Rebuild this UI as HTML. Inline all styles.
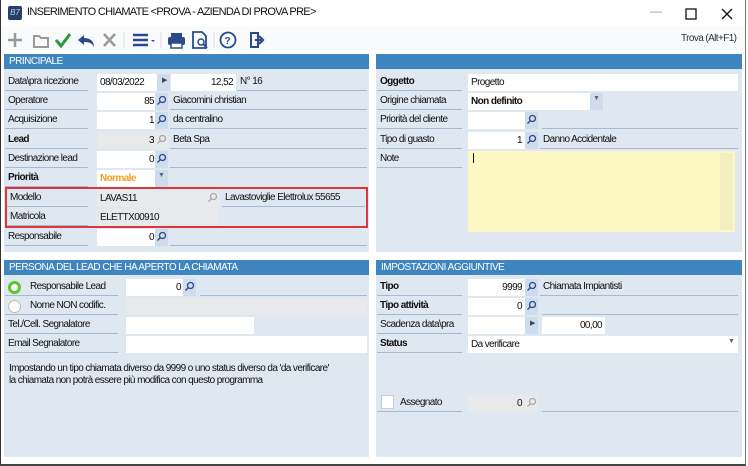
<!DOCTYPE html>
<html><head><meta charset="utf-8"><style>
*{margin:0;padding:0;box-sizing:border-box}
body{width:748px;height:466px;overflow:hidden;background:#fff;font-family:"Liberation Sans",sans-serif;font-size:10px;letter-spacing:-0.6px;color:#111;position:relative}
.a{position:absolute}
.win{left:0;top:0;width:746px;height:466px;border-left:1px solid #333;border-bottom:2px solid #444;border-right:1px solid #777}
.panel{background:#dfe7f1}
.hd{background:#3f86c0;color:#fff;font-size:10px;letter-spacing:-0.5px;height:15px;line-height:15px;padding-left:5px}
.lb{height:17px;line-height:16px;border-bottom:1px solid #a7b9d1;padding-left:3px;white-space:nowrap}
.b{font-weight:bold}
.in{background:#fff;height:17px;line-height:17px;padding:0 3px;white-space:nowrap;overflow:hidden}
.g{background:#e8e9eb}
.r{text-align:right}
.bt{background:#cfdcee;height:17px;width:13px}
.ds{height:17px;line-height:16px;border-bottom:1px solid #a7b9d1;padding-left:3px;white-space:nowrap;overflow:hidden}
</style></head><body>
<div class="a win"></div>
<!-- title -->
<div class="a" style="left:8px;top:6px;width:14px;height:14px;background:#2c3e66;border-radius:2px;color:#9fd0ff;font-size:8px;line-height:14px;text-align:center;font-style:italic;letter-spacing:0">B7</div>
<div class="a" style="left:27px;top:6px;font-size:11px;letter-spacing:-0.7px">INSERIMENTO CHIAMATE &lt;PROVA - AZIENDA DI PROVA PRE&gt;</div>
<div class="a" style="left:650px;top:4px;color:#999;font-size:12px">—</div>
<svg class="a" style="left:685px;top:8px" width="12" height="12"><rect x="1" y="1" width="10" height="10" fill="none" stroke="#111" stroke-width="1.3"/></svg>
<svg class="a" style="left:721px;top:8px" width="12" height="12"><path d="M1 1L11 11M11 1L1 11" stroke="#111" stroke-width="1.3"/></svg>
<!-- toolbar -->
<div class="a" style="left:1px;top:27px;width:744px;height:24px;background:#f9fafb"></div>
<svg class="a" style="left:6px;top:30px" width="260" height="20">
<path d="M9 3v14M2 10h14" stroke="#9a9a9a" stroke-width="2.5"/>
<path d="M28 6h5l2 2h7v9H28z" fill="none" stroke="#9a9a9a" stroke-width="2"/>
<path d="M50 10l5 6 9-12" fill="none" stroke="#2a9a3a" stroke-width="3"/>
<path d="M72 10l6-5v3c6 0 10 3 10 9-2-4-5-5-10-5v3z" fill="#2c4a8a"/>
<path d="M98 4l11 12M109 4L98 16" stroke="#9a9a9a" stroke-width="2.5"/>
<path d="M118 2v16" stroke="#ddd"/>
<path d="M127 5h15M127 10h15M127 15h15" stroke="#2c4a8a" stroke-width="2.5"/><path d="M145 10h4l-2 2z" fill="#2c4a8a"/>
<path d="M155 2v16" stroke="#ddd"/>
<rect x="162" y="7" width="17" height="8" rx="2" fill="#2c4a8a"/><rect x="165" y="3" width="11" height="5" fill="#2c4a8a"/><rect x="165" y="13" width="11" height="5" fill="#fff" stroke="#2c4a8a" stroke-width="1.5"/>
<path d="M187 2h9l4 4v12h-13z" fill="none" stroke="#2c4a8a" stroke-width="1.8"/><circle cx="195" cy="12" r="3" fill="none" stroke="#2c4a8a" stroke-width="1.5"/><path d="M197 14l4 4" stroke="#2c4a8a" stroke-width="1.8"/>
<path d="M208 2v16" stroke="#ddd"/>
<circle cx="222" cy="10" r="7.5" fill="none" stroke="#2c4a8a" stroke-width="1.8"/><text x="218.5" y="14" font-size="10" font-weight="bold" fill="#2c4a8a" font-family="Liberation Sans">?</text>
<path d="M245 3h7v14h-7z" fill="none" stroke="#2c4a8a" stroke-width="2"/><path d="M249 10h7M253 6l4 4-4 4" fill="none" stroke="#2c4a8a" stroke-width="2.2"/>
</svg>
<div class="a" style="left:681px;top:33px;color:#333">Trova (Alt+F1)</div>

<!-- top-left panel -->
<div class="a panel" style="left:4px;top:54px;width:365px;height:198px"></div>
<div class="a hd" style="left:4px;top:54px;width:365px">PRINCIPALE</div>
<div class="a lb" style="left:5px;top:74px;width:83px">Data\pra ricezione</div>
<div class="a in" style="left:97px;top:74px;width:60px">08/03/2022</div>
<div class="a bt" style="left:157px;top:74px"></div><div class="a" style="left:162px;top:76px;font-size:7px;color:#445">▶</div>
<div class="a in r" style="left:171px;top:74px;width:65px">12,52</div>
<div class="a ds" style="left:237px;top:74px;width:130px">N° 16</div>

<div class="a lb" style="left:5px;top:93px;width:83px">Operatore</div>
<div class="a in r" style="left:97px;top:93px;width:60px">85</div>
<div class="a bt" style="left:155px;top:93px"></div>
<div class="a ds" style="left:170px;top:93px;width:197px">Giacomini christian</div>

<div class="a lb" style="left:5px;top:112px;width:83px">Acquisizione</div>
<div class="a in r" style="left:97px;top:112px;width:60px">1</div>
<div class="a bt" style="left:155px;top:112px"></div>
<div class="a ds" style="left:170px;top:112px;width:197px">da centralino</div>

<div class="a lb b" style="left:5px;top:132px;width:83px">Lead</div>
<div class="a in r g" style="left:97px;top:132px;width:60px">3</div>
<div class="a" style="left:155px;top:132px;width:13px;height:17px;background:#e8e9eb"></div>
<div class="a ds" style="left:170px;top:132px;width:197px">Beta Spa</div>

<div class="a lb" style="left:5px;top:151px;width:83px">Destinazione lead</div>
<div class="a in r" style="left:97px;top:151px;width:60px">0</div>
<div class="a bt" style="left:155px;top:151px"></div>
<div class="a ds" style="left:170px;top:151px;width:197px"></div>

<div class="a lb b" style="left:5px;top:170px;width:83px">Priorità</div>
<div class="a in b" style="left:97px;top:170px;width:58px;color:#f0a020">Normale</div>
<div class="a bt" style="left:155px;top:170px"></div><div class="a" style="left:158px;top:172px;font-size:7px;color:#667">▼</div>

<div class="a" style="left:5px;top:187px;width:363px;height:41px;border:2px solid #d9363e"></div>
<div class="a lb" style="left:7px;top:190px;width:81px">Modello</div>
<div class="a in g" style="left:97px;top:190px;width:123px">LAVAS11</div>
<div class="a ds" style="left:222px;top:190px;width:143px">Lavastoviglie Elettrolux 55655</div>
<div class="a lb" style="left:7px;top:209px;width:81px">Matricola</div>
<div class="a in g" style="left:97px;top:209px;width:122px">ELETTX00910</div>

<div class="a lb" style="left:5px;top:229px;width:83px">Responsabile</div>
<div class="a in r" style="left:97px;top:229px;width:60px">0</div>
<div class="a bt" style="left:155px;top:229px"></div>
<div class="a ds" style="left:170px;top:229px;width:197px"></div>

<!-- top-right panel -->
<div class="a panel" style="left:376px;top:54px;width:366px;height:198px"></div>
<div class="a hd" style="left:376px;top:54px;width:366px"></div>
<div class="a lb b" style="left:377px;top:74px;width:85px">Oggetto</div>
<div class="a in" style="left:468px;top:74px;width:270px">Progetto</div>
<div class="a lb" style="left:377px;top:93px;width:85px">Origine chiamata</div>
<div class="a in b" style="left:468px;top:93px;width:122px">Non definito</div>
<div class="a bt" style="left:590px;top:93px"></div><div class="a" style="left:593px;top:95px;font-size:7px;color:#667">▼</div>
<div class="a lb" style="left:377px;top:112px;width:85px">Priorità del cliente</div>
<div class="a in" style="left:468px;top:112px;width:57px"></div>
<div class="a bt" style="left:525px;top:112px"></div>
<div class="a ds" style="left:542px;top:112px;width:196px"></div>
<div class="a lb" style="left:377px;top:132px;width:85px">Tipo di guasto</div>
<div class="a in r" style="left:468px;top:132px;width:57px">1</div>
<div class="a bt" style="left:525px;top:132px"></div>
<div class="a ds" style="left:540px;top:132px;width:198px">Danno Accidentale</div>
<div class="a lb" style="left:377px;top:151px;width:85px">Note</div>
<div class="a" style="left:468px;top:151px;width:267px;height:81px;background:#fdf8c4"></div>
<div class="a" style="left:473px;top:153px;width:1px;height:10px;background:#111"></div>
<div class="a" style="left:720px;top:153px;width:13px;height:77px;background:#f3efc0"></div>

<!-- bottom-left panel -->
<div class="a panel" style="left:4px;top:260px;width:365px;height:197px"></div>
<div class="a hd" style="left:4px;top:260px;width:365px">PERSONA DEL LEAD CHE HA APERTO LA CHIAMATA</div>
<div class="a" style="left:8px;top:281px;width:13px;height:13px;border-radius:50%;border:3px solid #5ac82a;background:#fff"></div>
<div class="a lb" style="left:5px;top:279px;width:113px;padding-left:25px">Responsabile Lead</div>
<div class="a in r" style="left:126px;top:279px;width:58px">0</div>
<div class="a bt" style="left:183px;top:279px"></div>
<div class="a ds" style="left:200px;top:279px;width:167px"></div>
<div class="a" style="left:8px;top:300px;width:13px;height:13px;border-radius:50%;border:1px solid #bbb;background:#fff"></div>
<div class="a lb" style="left:5px;top:298px;width:113px;padding-left:25px">Nome NON codific.</div>
<div class="a in g" style="left:126px;top:298px;width:241px"></div>
<div class="a lb" style="left:5px;top:317px;width:113px">Tel./Cell. Segnalatore</div>
<div class="a in" style="left:126px;top:317px;width:128px"></div>
<div class="a lb" style="left:5px;top:336px;width:113px">Email Segnalatore</div>
<div class="a in" style="left:126px;top:336px;width:241px"></div>
<div class="a" style="left:9px;top:363px;line-height:12px">Impostando un tipo chiamata diverso da 9999 o uno status diverso da 'da verificare'<br>la chiamata non potrà essere più modifica con questo programma</div>

<!-- bottom-right panel -->
<div class="a panel" style="left:376px;top:260px;width:366px;height:197px"></div>
<div class="a hd" style="left:376px;top:260px;width:366px">IMPOSTAZIONI AGGIUNTIVE</div>
<div class="a lb b" style="left:377px;top:279px;width:85px">Tipo</div>
<div class="a in r" style="left:468px;top:279px;width:57px">9999</div>
<div class="a bt" style="left:525px;top:279px"></div>
<div class="a ds" style="left:540px;top:279px;width:198px">Chiamata Impiantisti</div>
<div class="a lb b" style="left:377px;top:298px;width:85px">Tipo attività</div>
<div class="a in r" style="left:468px;top:298px;width:57px">0</div>
<div class="a bt" style="left:525px;top:298px"></div>
<div class="a ds" style="left:542px;top:298px;width:196px"></div>
<div class="a lb" style="left:377px;top:317px;width:85px">Scadenza data\pra</div>
<div class="a in" style="left:468px;top:317px;width:57px"></div>
<div class="a bt" style="left:525px;top:317px"></div><div class="a" style="left:530px;top:319px;font-size:7px;color:#445">▶</div>
<div class="a in r" style="left:542px;top:317px;width:63px">00,00</div>
<div class="a lb b" style="left:377px;top:336px;width:85px">Status</div>
<div class="a in" style="left:468px;top:336px;width:270px">Da verificare</div>
<div class="a" style="left:728px;top:338px;font-size:7px;color:#667">▼</div>
<div class="a" style="left:381px;top:395px;width:13px;height:14px;background:#fff;border:1px solid #ccc"></div>
<div class="a lb" style="left:377px;top:395px;width:85px;padding-left:23px">Assegnato</div>
<div class="a in r g" style="left:468px;top:395px;width:57px">0</div>
<div class="a" style="left:525px;top:395px;width:13px;height:17px;background:#e8e9eb"></div>
<div class="a ds" style="left:542px;top:395px;width:196px"></div>

<!-- search icons -->
<svg class="a" style="left:0;top:0" width="748" height="466">
<g fill="none" stroke-width="1.3">
<g stroke="#2c4a8a">
<circle cx="162.5" cy="99.5" r="3"/><path d="M160.5 101.5l-3 3"/>
<circle cx="162.5" cy="118.5" r="3"/><path d="M160.5 120.5l-3 3"/>
<circle cx="162.5" cy="157.5" r="3"/><path d="M160.5 159.5l-3 3"/>
<circle cx="162.5" cy="235.5" r="3"/><path d="M160.5 237.5l-3 3"/>
<circle cx="532.5" cy="118.5" r="3"/><path d="M530.5 120.5l-3 3"/>
<circle cx="532.5" cy="138.5" r="3"/><path d="M530.5 140.5l-3 3"/>
<circle cx="190.5" cy="285.5" r="3"/><path d="M188.5 287.5l-3 3"/>
<circle cx="532.5" cy="285.5" r="3"/><path d="M530.5 287.5l-3 3"/>
<circle cx="532.5" cy="304.5" r="3"/><path d="M530.5 306.5l-3 3"/>
</g>
<g stroke="#aaa">
<circle cx="162.5" cy="138.5" r="3"/><path d="M160.5 140.5l-3 3"/>
<circle cx="213.5" cy="196.5" r="3"/><path d="M211.5 198.5l-3 3"/>
<circle cx="532.5" cy="401.5" r="3"/><path d="M530.5 403.5l-3 3"/>
</g></g></svg>
</body></html>
